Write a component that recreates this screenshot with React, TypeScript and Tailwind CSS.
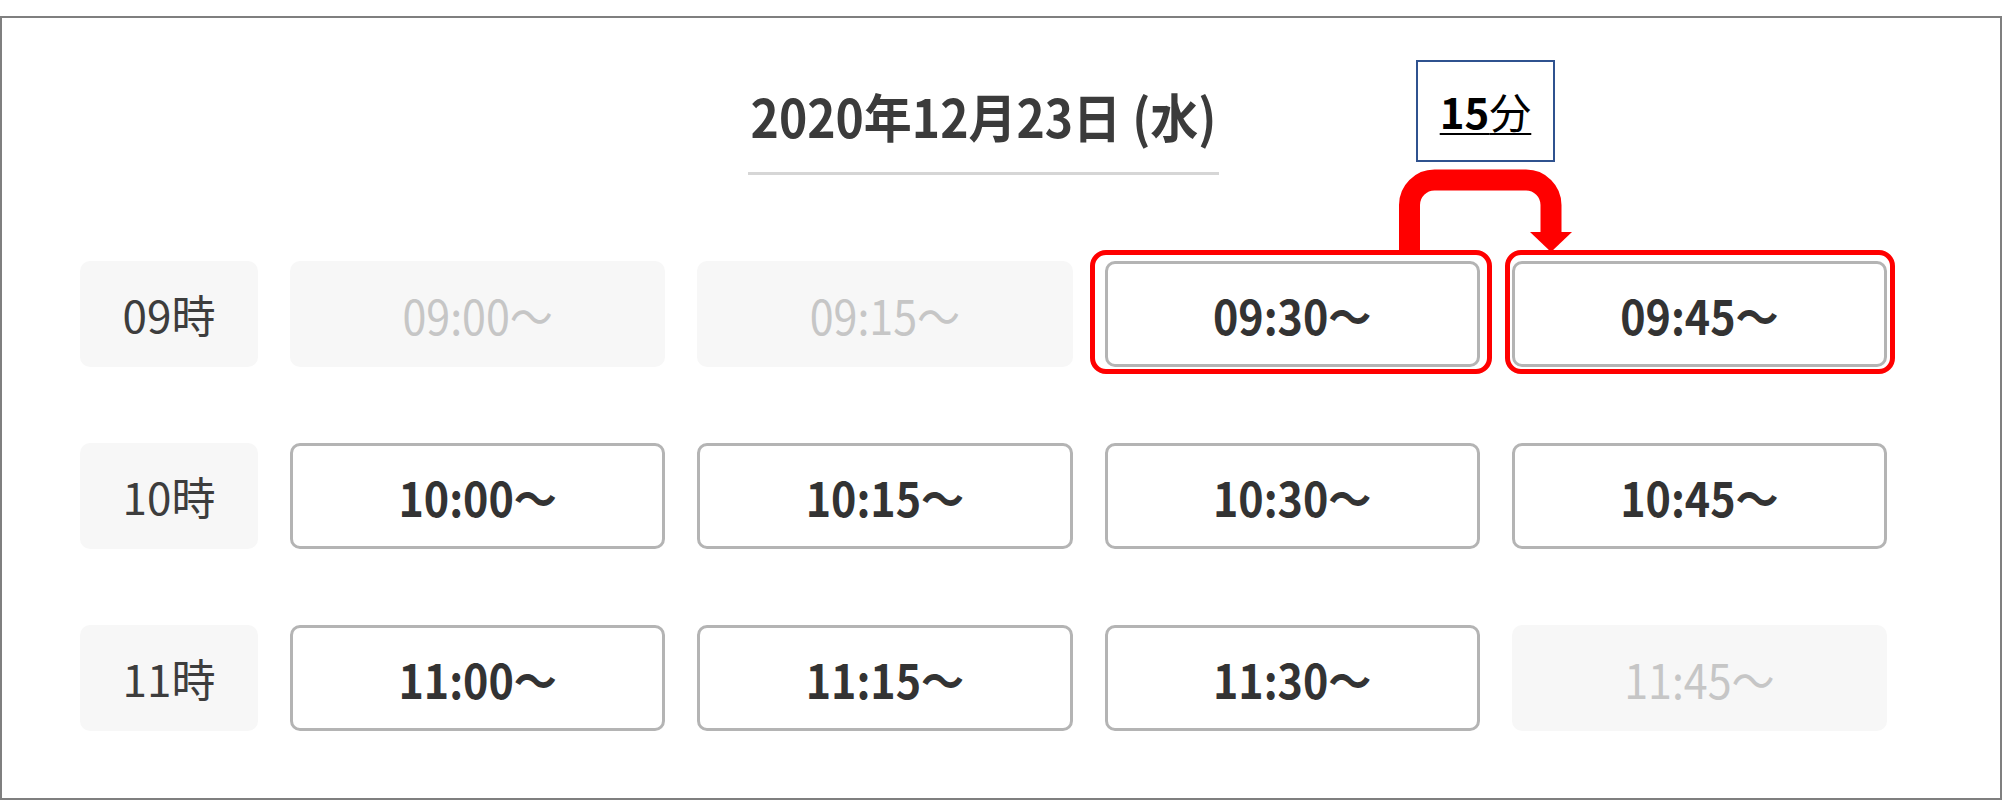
import React from "react";

type Slot = { label: string; available: boolean };

const rows: { hour: string; slots: Slot[] }[] = [
  {
    hour: "09時",
    slots: [
      { label: "09:00～", available: false },
      { label: "09:15～", available: false },
      { label: "09:30～", available: true },
      { label: "09:45～", available: true },
    ],
  },
  {
    hour: "10時",
    slots: [
      { label: "10:00～", available: true },
      { label: "10:15～", available: true },
      { label: "10:30～", available: true },
      { label: "10:45～", available: true },
    ],
  },
  {
    hour: "11時",
    slots: [
      { label: "11:00～", available: true },
      { label: "11:15～", available: true },
      { label: "11:30～", available: true },
      { label: "11:45～", available: false },
    ],
  },
];

const jp = "font-['Noto_Sans_CJK_JP','Noto_Sans_CJK_SC',sans-serif]";

export default function App() {
  return (
    <div className={`relative w-[2002px] h-[801px] bg-white overflow-hidden ${jp}`}>
      <div className="mt-[16px] h-[784px] border-2 border-[#7f7f7f]">
        <div className="ml-[78px] w-[1807px]">
          <div className="flex justify-center pt-[73px]">
            <div className="border-b-[3px] border-[#d6d6d6] pb-[31px] px-[3px]">
              <h1 className="inline-block scale-y-[1.1] text-[48px] leading-[48px] font-bold text-[#3b3b3b]">
                2020年12月23日<span className="ml-[11px]">(水)</span>
              </h1>
            </div>
          </div>
          <div className="mt-[86px] grid grid-cols-[178px_repeat(4,1fr)] gap-x-[32px] gap-y-[76px] auto-rows-[106px]">
            {rows.map((row) => (
              <React.Fragment key={row.hour}>
                <div className="flex items-center justify-center rounded-[10px] bg-[#f7f7f7] text-[44px] text-[#3d3d3d]">
                  {row.hour}
                </div>
                {row.slots.map((s) =>
                  s.available ? (
                    <div
                      key={s.label}
                      className="flex items-center justify-center rounded-[10px] border-[3px] border-[#b4b4b4] bg-white text-[43px] font-bold text-[#333333]"
                    >
                      <span className="inline-block scale-y-[1.1]">{s.label}</span>
                    </div>
                  ) : (
                    <div
                      key={s.label}
                      className="flex items-center justify-center rounded-[10px] bg-[#f7f7f7] text-[43px] text-[#c6c6c6]"
                    >
                      <span className="inline-block scale-y-[1.1]">{s.label}</span>
                    </div>
                  )
                )}
              </React.Fragment>
            ))}
          </div>
        </div>
      </div>

      {/* annotation: red highlight boxes */}
      <div className="absolute left-[1090px] top-[250px] w-[402px] h-[124px] rounded-[16px] border-[5px] border-[#ff0000]" />
      <div className="absolute left-[1505px] top-[250px] w-[390px] h-[124px] rounded-[16px] border-[5px] border-[#ff0000]" />

      {/* annotation: arrow */}
      <svg className="absolute left-0 top-0 pointer-events-none" width="2002" height="801" viewBox="0 0 2002 801">
        <path
          d="M1409.5 252 V205 A25 25 0 0 1 1434.5 180 H1526 A25 25 0 0 1 1551 205 V234"
          fill="none"
          stroke="#ff0000"
          strokeWidth="21"
        />
        <polygon points="1530,232 1572,232 1551,252" fill="#ff0000" />
      </svg>

      {/* annotation: 15分 box */}
      <div className="absolute left-[1416px] top-[60px] w-[139px] h-[102px] border-[2.5px] border-[#2f528f] bg-white flex items-center justify-center">
        <span className="text-[42px] leading-none text-black underline decoration-[2px] underline-offset-[4px]">
          <span className="font-bold">15</span>
          <span>分</span>
        </span>
      </div>
    </div>
  );
}
